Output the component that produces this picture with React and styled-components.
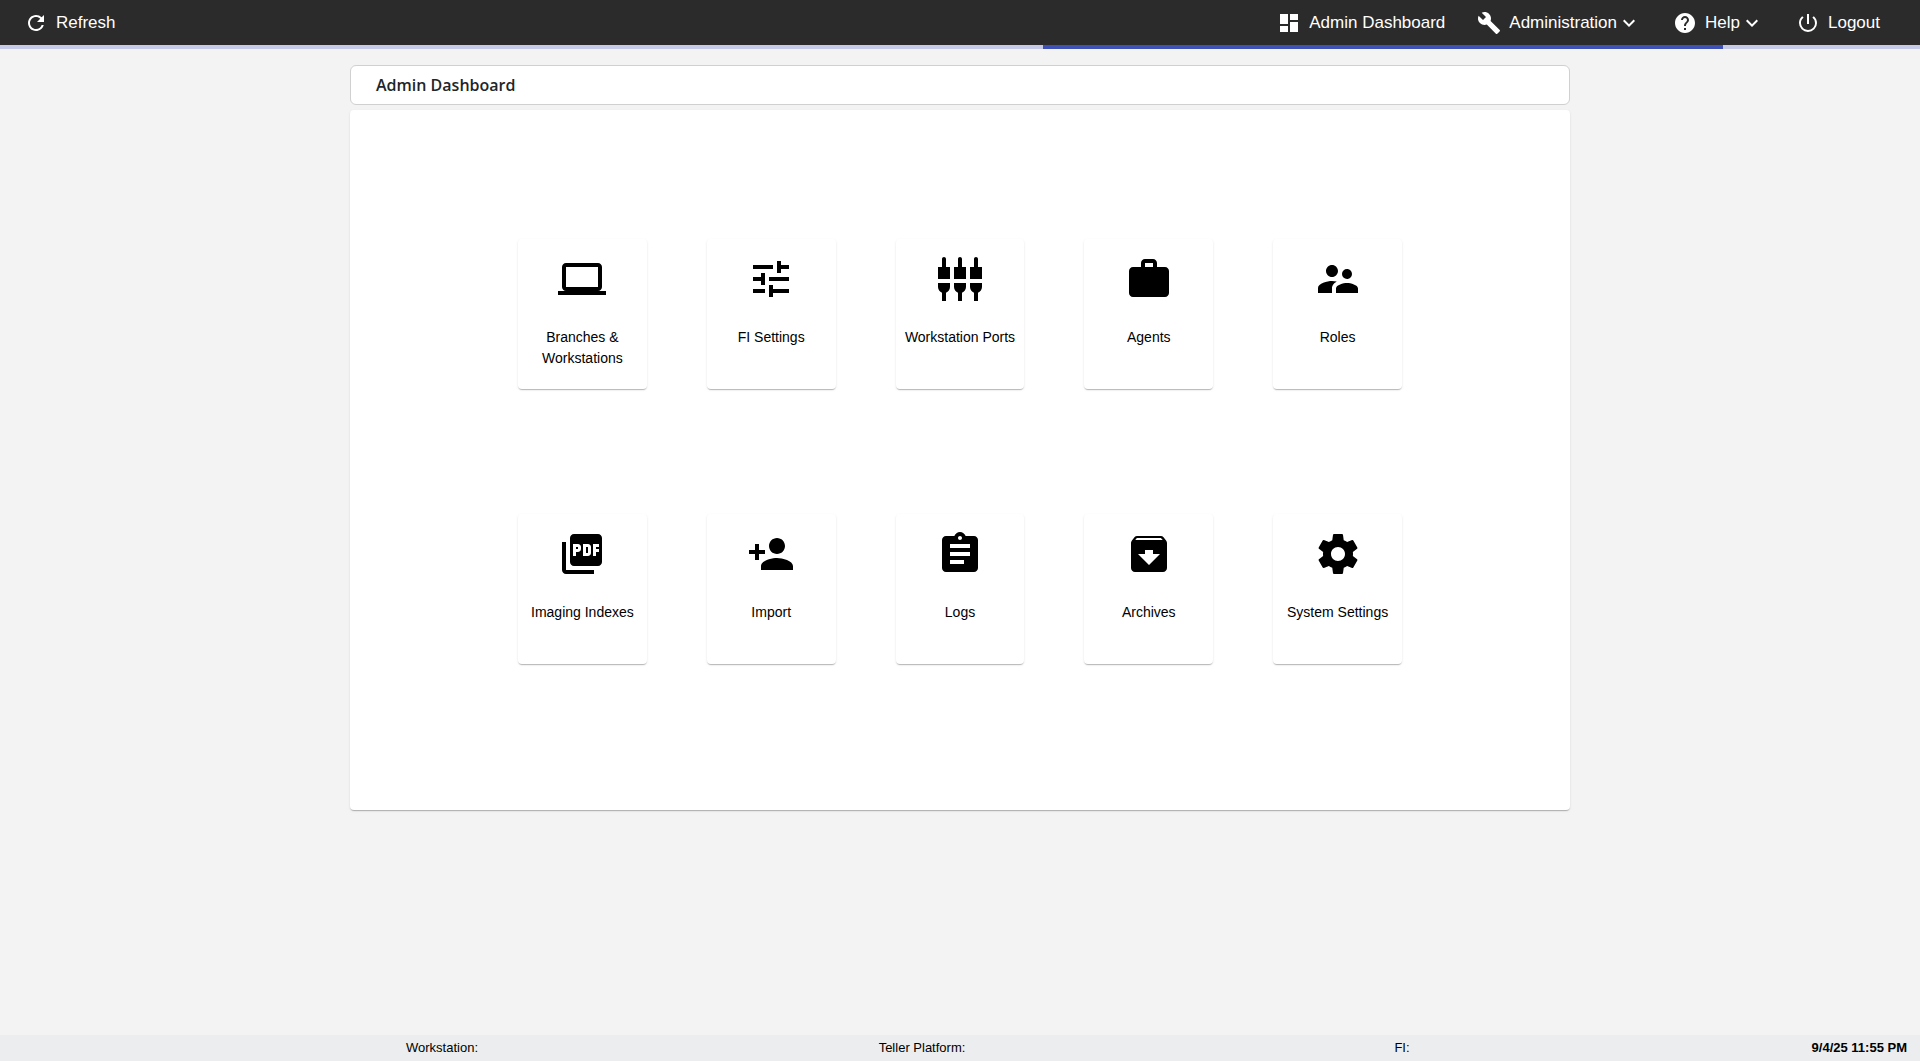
import React from "react";
import styled, { createGlobalStyle } from "styled-components";
import {
  MdArchive,
  MdAssignment,
  MdBuild,
  MdDashboard,
  MdExpandMore,
  MdHelp,
  MdLaptop,
  MdPersonAdd,
  MdPictureAsPdf,
  MdPowerSettingsNew,
  MdRefresh,
  MdSettingsInputComponent,
  MdSupervisorAccount,
  MdTune,
  MdWork,
} from "react-icons/md";

const GlobalStyle = createGlobalStyle`
  * {
    box-sizing: border-box;
  }
  body {
    margin: 0;
    background: #f3f3f3;
    color: #000;
    font-family: Arial, "Liberation Sans", sans-serif;
  }
`;

const Page = styled.div`
  min-height: 100vh;
  display: flex;
  flex-direction: column;
`;

const Toolbar = styled.header`
  height: 45px;
  padding: 0 40px 0 24px;
  display: flex;
  align-items: center;
  justify-content: space-between;
  background: #2b2b2b;
`;

const Nav = styled.nav`
  display: flex;
  align-items: center;
  gap: 32px;
`;

const NavButton = styled.button`
  display: flex;
  align-items: center;
  padding: 0;
  border: none;
  background: none;
  color: #fff;
  font-family: inherit;
  font-size: 17px;
  line-height: 24px;
  cursor: pointer;
  svg {
    width: 24px;
    height: 24px;
  }
  span {
    margin-left: 8px;
  }
`;

const ProgressTrack = styled.div`
  height: 4px;
  background: #c5cae9;
`;

const ProgressBar = styled.div`
  height: 100%;
  background: #3f51b5;
`;

const Main = styled.main`
  flex: 1;
  width: 100%;
  max-width: 1220px;
  margin: 0 auto;
  padding: 16px 0;
`;

const TitleBar = styled.div`
  height: 40px;
  margin-bottom: 5px;
  padding: 0 25px;
  display: flex;
  align-items: center;
  border: 1px solid #d0d0d0;
  border-radius: 6px;
  background: #fff;
`;

const Title = styled.h1`
  margin: 0;
  color: #212529;
  font-family: "Segoe UI", "Open Sans", sans-serif;
  font-size: 16px;
  font-weight: 600;
  line-height: 24px;
`;

const Surface = styled.div`
  border-radius: 4px;
  background: #fff;
  box-shadow: 0 2px 1px -1px rgba(0, 0, 0, 0.16),
    0 1px 1px 0 rgba(0, 0, 0, 0.1), 0 1px 3px 0 rgba(0, 0, 0, 0.08);
`;

const Panel = styled(Surface)`
  padding: 129px 168px 146px;
  display: grid;
  grid-template-columns: repeat(5, 1fr);
  gap: 125px 60px;
`;

const Tile = styled(Surface)`
  min-height: 150px;
  padding: 16px 8px;
  display: flex;
  flex-direction: column;
  align-items: center;
  gap: 24px;
  color: #000;
  font-size: 14px;
  line-height: 21px;
  text-align: center;
  text-decoration: none;
  svg {
    width: 48px;
    height: 48px;
  }
`;

const StatusBar = styled.footer`
  height: 26px;
  display: grid;
  grid-template-columns: 1fr repeat(3, 25%) 278px;
  align-items: center;
  background: #ebedef;
  font-size: 13px;
  line-height: 20px;
  text-align: center;
`;

const StatusItem = styled.div`
  &:first-child {
    grid-column: 2;
  }
`;

const Clock = styled.time`
  padding-right: 13px;
  font-weight: 700;
  text-align: right;
`;

const GearIcon = () => {
  return (
    <svg viewBox="0 0 24 24" fill="currentColor" aria-hidden="true">
      <path d="M19.43 12.98c.04-.32.07-.64.07-.98s-.03-.66-.07-.98l2.11-1.65c.19-.15.24-.42.12-.64l-2-3.46c-.12-.22-.39-.3-.61-.22l-2.49 1c-.52-.4-1.08-.73-1.69-.98l-.38-2.65C14.46 2.18 14.25 2 14 2h-4c-.25 0-.46.18-.49.42l-.38 2.65c-.61.25-1.17.59-1.69.98l-2.49-1c-.23-.09-.49 0-.61.22l-2 3.46c-.13.22-.07.49.12.64l2.11 1.65c-.04.32-.07.65-.07.98s.03.66.07.98l-2.11 1.65c-.19.15-.24.42-.12.64l2 3.46c.12.22.39.3.61.22l2.49-1c.52.4 1.08.73 1.69.98l.38 2.65c.03.24.24.42.49.42h4c.25 0 .46-.18.49-.42l.38-2.65c.61-.25 1.17-.59 1.69-.98l2.49 1c.23.09.49 0 .61-.22l2-3.46c.12-.22.07-.49-.12-.64l-2.11-1.65zM12 15.5c-1.93 0-3.5-1.57-3.5-3.5s1.57-3.5 3.5-3.5 3.5 1.57 3.5 3.5-1.57 3.5-3.5 3.5z" />
    </svg>
  );
};

const navItems = [
  { label: "Admin Dashboard", Icon: MdDashboard },
  { label: "Administration", Icon: MdBuild, menu: true },
  { label: "Help", Icon: MdHelp, menu: true },
  { label: "Logout", Icon: MdPowerSettingsNew },
];

const tiles = [
  { label: "Branches & Workstations", path: "branches", Icon: MdLaptop },
  { label: "FI Settings", path: "fi-settings", Icon: MdTune },
  { label: "Workstation Ports", path: "ports", Icon: MdSettingsInputComponent },
  { label: "Agents", path: "agents", Icon: MdWork },
  { label: "Roles", path: "roles", Icon: MdSupervisorAccount },
  { label: "Imaging Indexes", path: "imaging", Icon: MdPictureAsPdf },
  { label: "Import", path: "import", Icon: MdPersonAdd },
  { label: "Logs", path: "logs", Icon: MdAssignment },
  { label: "Archives", path: "archives", Icon: MdArchive },
  { label: "System Settings", path: "system", Icon: GearIcon },
];

const progress = { start: 54.3, width: 35.45 };

const NavItem = ({ label, Icon, menu }) => {
  return (
    <NavButton type="button" aria-haspopup={menu ? "menu" : undefined}>
      <Icon />
      <span>{label}</span>
      {menu && <MdExpandMore />}
    </NavButton>
  );
};

const App = () => {
  return (
    <>
      <GlobalStyle />
      <Page>
        <Toolbar>
          <NavItem label="Refresh" Icon={MdRefresh} />
          <Nav>
            {navItems.map((item) => (
              <NavItem key={item.label} {...item} />
            ))}
          </Nav>
        </Toolbar>
        <ProgressTrack role="progressbar" aria-label="Loading">
          <ProgressBar
            style={{
              marginLeft: `${progress.start}%`,
              width: `${progress.width}%`,
            }}
          />
        </ProgressTrack>
        <Main>
          <TitleBar>
            <Title>Admin Dashboard</Title>
          </TitleBar>
          <Panel>
            {tiles.map(({ label, path, Icon }) => (
              <Tile as="a" key={path} href={`#/${path}`}>
                <Icon />
                <span>{label}</span>
              </Tile>
            ))}
          </Panel>
        </Main>
        <StatusBar>
          <StatusItem>Workstation:</StatusItem>
          <StatusItem>Teller Platform:</StatusItem>
          <StatusItem>FI:</StatusItem>
          <Clock>9/4/25 11:55 PM</Clock>
        </StatusBar>
      </Page>
    </>
  );
};

export default App;
